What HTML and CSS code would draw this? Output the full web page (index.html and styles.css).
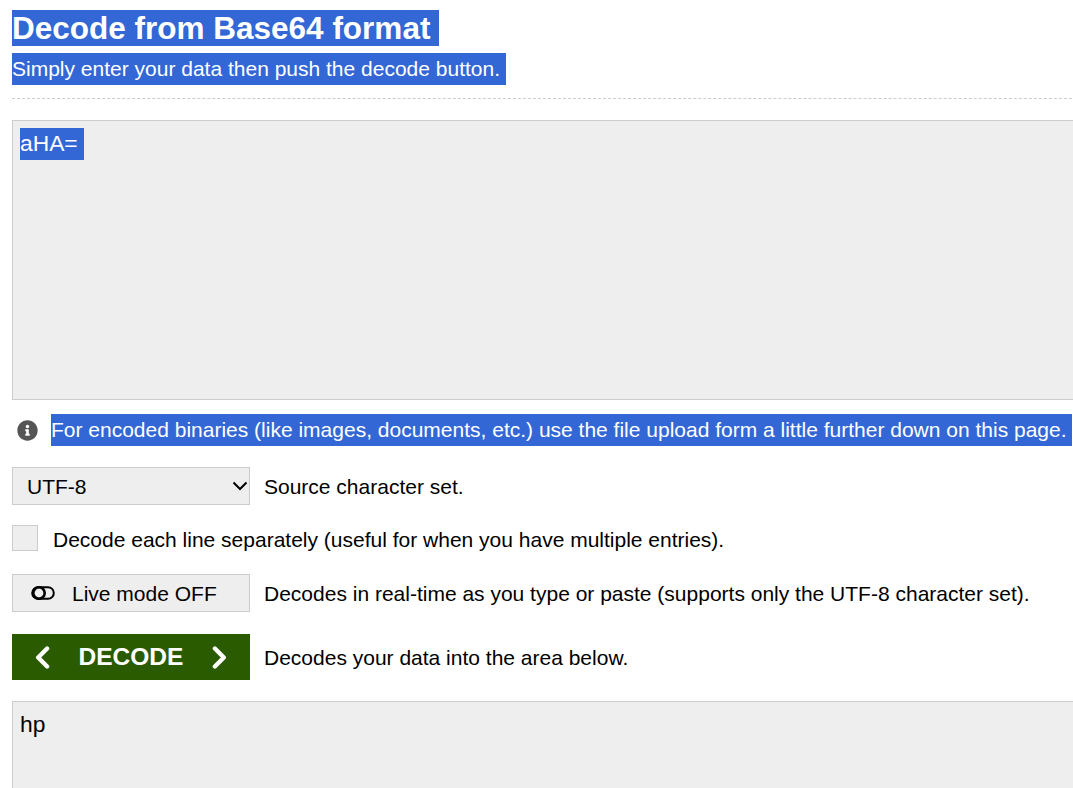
FILE: index.html
```html
<!DOCTYPE html>
<html lang="en">
<head>
<meta charset="utf-8">
<title>Decode from Base64 format</title>
<link rel="stylesheet" href="styles.css">
</head>
<body>
<main class="page">
  <h1 class="title"><span class="sel">Decode from Base64 format&nbsp;</span></h1>
  <p class="subtitle"><span class="sel">Simply enter your data then push the decode button.&nbsp;</span></p>
  <hr class="rule">
  <div class="area area-input"><span class="sel area-sel">aHA=&nbsp;</span></div>
  <div class="row note">
    <svg class="info" viewBox="0 0 512 512"><path d="M256 8C119.043 8 8 119.083 8 256c0 136.997 111.043 248 248 248s248-111.003 248-248C504 119.083 392.957 8 256 8zm0 110c23.196 0 42 18.804 42 42s-18.804 42-42 42-42-18.804-42-42 18.804-42 42-42zm56 254c0 6.627-5.373 12-12 12h-88c-6.627 0-12-5.373-12-12v-24c0-6.627 5.373-12 12-12h12v-64h-12c-6.627 0-12-5.373-12-12v-24c0-6.627 5.373-12 12-12h64c6.627 0 12 5.373 12 12v100h12c6.627 0 12 5.373 12 12v24z"/></svg>
    <span class="sel">For encoded binaries (like images, documents, etc.) use the file upload form a little further down on this page.&nbsp;</span>
  </div>
  <div class="row charset">
    <div class="control select">
      <span class="label">UTF-8</span>
      <svg class="caret" viewBox="0 0 16 10"><path d="M1.5 1.5 8 8l6.500-6.500"/></svg>
    </div>
    <span class="hint">Source character set.</span>
  </div>
  <div class="row lines">
    <span class="checkbox"></span>
    <span class="lines-text">Decode each line separately (useful for when you have multiple entries).</span>
  </div>
  <div class="row live">
    <div class="control toggle">
      <svg class="toggle-icon" viewBox="0 0 24 14"><rect x="1.200" y="1.200" width="21.600" height="11.600" rx="5.800" class="pill"/><circle cx="8" cy="7" r="5.700"/></svg>
      <span class="label">Live mode OFF</span>
    </div>
    <span class="hint">Decodes in real-time as you type or paste (supports only the UTF-8 character set).</span>
  </div>
  <div class="row action">
    <div class="decode">
      <svg class="chev" viewBox="0 0 14 18"><path d="M11 2 4 9l7 7"/></svg>
      <span>DECODE</span>
      <svg class="chev" viewBox="0 0 14 18"><path d="M3 2l7 7-7 7"/></svg>
    </div>
    <span class="hint">Decodes your data into the area below.</span>
  </div>
  <div class="area area-output">hp</div>
</main>
</body>
</html>
```
FILE: styles.css
```css
html, body {
  margin: 0;
  height: 788px;
  overflow: hidden;
  background: #fff;
}
.page {
  padding: 10px 0 0 12px;
  font-family: "Liberation Sans", Arial, sans-serif;
  font-size: 21px;
  color: #000;
}
.sel {
  display: inline-block;
  background: #3367d6;
  color: #fff;
}
.title {
  margin: 0;
  font-size: 31.500px;
  line-height: 36px;
  font-weight: 700;
  height: 36px;
}
.subtitle {
  margin: 7px 0 0;
  line-height: 32px;
  height: 32px;
}
.rule {
  margin: 13px 0 0;
  border: 0;
  border-top: 1px dashed #ccc;
  width: 1100px;
}
.area {
  box-sizing: border-box;
  width: 1100px;
  background: #eee;
  border: 1px solid #ccc;
  padding: 7px;
  font-size: 22.800px;
  line-height: 30px;
}
.area-sel {
  padding-bottom: 2px;
}
.area-input {
  margin-top: 21px;
  height: 280px;
}
.area-output {
  margin-top: 21px;
  height: 200px;
}
.row {
  display: flex;
  align-items: center;
  white-space: nowrap;
}
.note {
  margin-top: 14px;
  height: 32px;
  line-height: 32px;
}
.info {
  width: 21px;
  height: 21px;
  margin: 0 13px 0 5px;
  fill: #555;
}
.charset {
  margin-top: 21px;
}
.control {
  box-sizing: border-box;
  width: 238px;
  height: 38px;
  background: #eee;
  border: 1px solid #ccc;
  display: flex;
  align-items: center;
}
.label {
  padding-top: 2px;
}
.hint {
  margin-left: 14px;
  padding-top: 2px;
}
.select {
  justify-content: space-between;
  padding: 0 0 0 14px;
}
.caret {
  width: 16px;
  height: 10px;
  margin-right: 1px;
  fill: none;
  stroke: #000;
  stroke-width: 2;
}
.lines {
  margin-top: 20px;
  height: 26px;
}
.lines-text {
  padding-top: 3px;
}
.checkbox {
  box-sizing: border-box;
  width: 26px;
  height: 26px;
  margin-right: 15px;
  background: #eee;
  border: 1px solid #ccc;
}
.live {
  margin-top: 23px;
}
.toggle {
  padding-left: 18px;
}
.toggle-icon {
  width: 24px;
  height: 14px;
  margin-right: 17px;
  fill: none;
  stroke: #000;
  stroke-width: 2.600;
}
.pill {
  stroke-width: 2;
}
.action {
  margin-top: 22px;
}
.decode {
  box-sizing: border-box;
  width: 238px;
  height: 46px;
  background: #2b5b00;
  color: #fff;
  font-weight: 700;
  font-size: 24.500px;
  display: flex;
  align-items: center;
  justify-content: space-between;
  padding: 0 21px;
}
.chev {
  width: 18px;
  height: 23px;
  fill: none;
  stroke: #fff;
  stroke-width: 3.400;
  stroke-linecap: round;
  stroke-linejoin: round;
}
```
